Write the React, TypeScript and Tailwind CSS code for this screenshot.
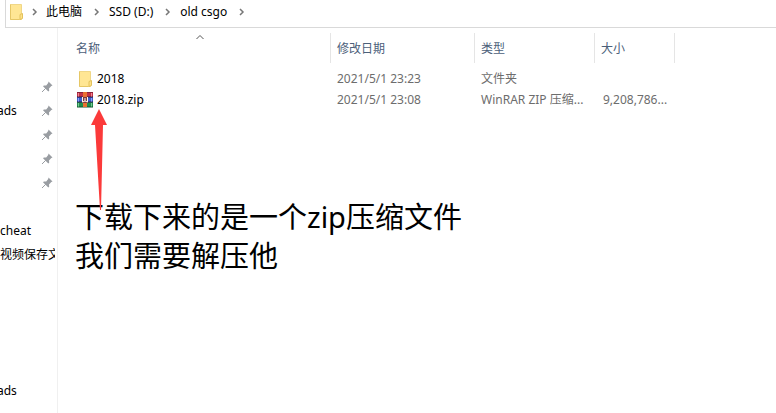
import type { ReactNode } from 'react'

type SidebarRow = { label?: string; pinned?: boolean; className?: string }

const sidebarRows: SidebarRow[] = [
  { pinned: true },
  { label: 'ads', pinned: true, className: '-ml-[3px]' },
  { pinned: true },
  { pinned: true },
  { pinned: true },
  {},
  { label: 'cheat' },
  { label: '视频保存文件' },
]

const files = [
  { name: '2018', icon: <FolderIcon />, date: '2021/5/1 23:23', type: '文件夹', size: '' },
  { name: '2018.zip', icon: <ArchiveIcon />, date: '2021/5/1 23:08', type: 'WinRAR ZIP 压缩...', size: '9,208,786...' },
]

function FolderIcon() {
  return (
    <svg width="16" height="18" viewBox="0 0 16 18" className="shrink-0" aria-hidden="true">
      <path d="M2.5 1.5h11v15h-11z" fill="#ffe694" stroke="#f0d787" />
      <path d="M2.5 1.5v15h9" fill="none" stroke="#e6c766" />
      <path d="M12 11.5l2.500-1v5l-2.500 1z" fill="#ffe28a" stroke="#e3c25d" />
    </svg>
  )
}

function ArchiveIcon() {
  return (
    <svg width="16" height="16" viewBox="0 0 16 16" className="shrink-0" aria-hidden="true">
      <rect width="16" height="5" fill="#c22f45" />
      <rect y="5" width="16" height="5" fill="#3a5bd0" />
      <rect y="10" width="16" height="5" fill="#1f8f4c" />
      <path d="M0 0.500h16" stroke="#8a2238" />
      <path d="M0 5h16M0 10h16" stroke="#2c2140" />
      <path d="M0 15h16" stroke="#14542f" />
      <path d="M1.500 1v3.500M14.500 1v3.500" stroke="#e98a96" />
      <path d="M1.500 6v3.500M14.500 6v3.500" stroke="#8fa3ee" />
      <path d="M1.500 11v3.500M14.500 11v3.500" stroke="#7cc596" />
      <rect x="6" width="4" height="15" fill="#ea7030" />
      <rect x="5" y="5" width="6" height="6" fill="#7d3b3f" />
      <path d="M5.500 5v5l2.500-1 2.500 1V5M8 6v3" stroke="#fff6ea" fill="none" />
    </svg>
  )
}

function PinIcon() {
  return (
    <svg width="12" height="12" viewBox="0 0 12 12" className="shrink-0" aria-hidden="true">
      <path d="M7.500 0.500l4 4-1.200.6-2.300 2.300.2 2.300-.9.900L2 5.300l.9-.9 2.300.2L7.200 2z" fill="#999da2" />
      <path d="M4.800 7.200L1 11" stroke="#999da2" />
    </svg>
  )
}

function Chevron() {
  return (
    <svg width="6" height="8" viewBox="0 0 6 8" className="shrink-0" aria-hidden="true">
      <path d="M1 1l3 3-3 3" fill="none" stroke="#777777" strokeWidth="1.500" />
    </svg>
  )
}

function Crumb({ children }: { children: ReactNode }) {
  return (
    <li className="flex items-center gap-3">
      <button type="button" className="whitespace-nowrap">{children}</button>
      <Chevron />
    </li>
  )
}

function Sidebar() {
  return (
    <aside className="w-[58px] shrink-0 overflow-hidden border-r border-[#f0f0f0] pt-[47px] pr-[2px]">
      <ul className="overflow-hidden">
        {sidebarRows.map((row, i) => (
          <li key={i} className="flex h-6 items-center whitespace-nowrap pr-[2px]">
            {row.label && <span className={row.className}>{row.label}</span>}
            {row.pinned && <span className="ml-auto"><PinIcon /></span>}
          </li>
        ))}
      </ul>
      <div className="mt-28 flex h-6 items-center">
        <span className="-ml-[3px]">ads</span>
      </div>
    </aside>
  )
}

function FileTable() {
  const head = 'border-r border-[#e5e5e5] pt-[2px] pl-[6px] font-normal'
  return (
    <table className="w-[606px] table-fixed border-separate border-spacing-0 text-left">
      <colgroup>
        <col className="w-[262px]" />
        <col className="w-36" />
        <col className="w-[120px]" />
        <col className="w-20" />
      </colgroup>
      <thead className="text-[#4c607a]">
        <tr className="h-[30px]">
          <th className="relative border-r border-[#e5e5e5] pt-[2px] pl-[7px] font-normal">
            名称
            <svg width="9" height="6" viewBox="0 0 9 6" className="absolute top-px left-1/2 -translate-x-1/2" aria-hidden="true">
              <path d="M1 5l3.500-3.500L8 5" fill="none" stroke="#555555" />
            </svg>
          </th>
          <th className={head}>修改日期</th>
          <th className={head}>类型</th>
          <th className={head}>大小</th>
        </tr>
      </thead>
      <tbody className="text-[#6d6d6d]">
        <tr className="h-[5px]" />
        {files.map((file) => (
          <tr key={file.name} className="h-[21px] whitespace-nowrap">
            <td className="pl-2 text-black">
              <div className="flex items-center gap-1">
                {file.icon}
                {file.name}
              </div>
            </td>
            <td className="pl-[6px]">{file.date}</td>
            <td className="pl-[6px]">{file.type}</td>
            <td className="pl-2">{file.size}</td>
          </tr>
        ))}
      </tbody>
    </table>
  )
}

export default function App() {
  return (
    <div className="flex h-screen flex-col overflow-hidden bg-white font-['Noto_Sans','Noto_Sans_CJK_SC',sans-serif] text-[12px] leading-4 text-black">
      <nav aria-label="路径" className="ml-[5px] flex h-7 shrink-0 items-center border-b border-l border-[#d9d9d9] pb-[3px] pl-[2px]">
        <FolderIcon />
        <span className="mx-2 flex"><Chevron /></span>
        <ol className="flex items-center gap-[9px]">
          <Crumb>此电脑</Crumb>
          <Crumb>SSD (D:)</Crumb>
          <Crumb>old csgo</Crumb>
        </ol>
      </nav>
      <div className="flex min-h-0 flex-1">
        <Sidebar />
        <main className="relative min-w-0 flex-1 pt-[5px] pl-[11px]">
          <FileTable />
          <p className="absolute top-[169px] left-[17px] whitespace-nowrap text-[29px] leading-[39px]">
            下载下来的是一个zip压缩文件
            <br />
            我们需要解压他
          </p>
          <svg width="18" height="102" viewBox="0 0 18 102" className="absolute top-[81px] left-[33px]" aria-hidden="true">
            <path d="M8 0L16 16l-4 0-2 85h-1L4 16l-4 0z" fill="#fb3a3a" />
          </svg>
        </main>
      </div>
    </div>
  )
}
